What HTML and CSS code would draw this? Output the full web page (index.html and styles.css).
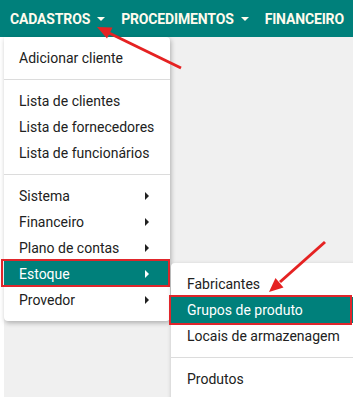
FILE: index.html
```html
<!doctype html>
<html>
    <head>
        <meta charset="utf-8"/>
        <title>Cadastros</title>
        <link rel="stylesheet" href="styles.css">
    </head>
    <body>
        <header class="navbar">
            <a class="nav-link dropdown-toggle">Cadastros</a>
            <a class="nav-link dropdown-toggle">Procedimentos</a>
            <a class="nav-link">Financeiro</a>
        </header>
        <main class="page">
            <div class="content"></div>

            <ul class="dropdown-menu main-menu">
                <li class="dropdown-item">Adicionar cliente</li>
                <li class="dropdown-divider"></li>
                <li class="dropdown-item">Lista de clientes</li>
                <li class="dropdown-item">Lista de fornecedores</li>
                <li class="dropdown-item">Lista de funcionários</li>
                <li class="dropdown-divider"></li>
                <li class="dropdown-item submenu">Sistema</li>
                <li class="dropdown-item submenu">Financeiro</li>
                <li class="dropdown-item submenu">Plano de contas</li>
                <li class="dropdown-item submenu active marked">Estoque</li>
                <li class="dropdown-item submenu">Provedor</li>
            </ul>

            <ul class="dropdown-menu sub-menu">
                <li class="dropdown-item">Fabricantes</li>
                <li class="dropdown-item active marked marked-wide">Grupos de produto</li>
                <li class="dropdown-item">Locais de armazenagem</li>
                <li class="dropdown-divider"></li>
                <li class="dropdown-item">Produtos</li>
            </ul>
        </main>

        <!-- setas de anotação -->
        <svg class="annotations" width="353" height="397" viewBox="0 0 353 397">
            <line x1="181" y1="68" x2="109" y2="33" />
            <polygon points="97,27 112.5,27.5 107,38.5" />
            <line x1="325" y1="242" x2="280" y2="282" />
            <polygon points="269,292 283.5,287.5 275.5,278" />
        </svg>
    </body>
</html>
```

FILE: styles.css
```css
* {
    margin: 0;
    padding: 0;
    box-sizing: border-box;
}
body {
    width: 353px;
    height: 397px;
    overflow: hidden;
    position: relative;
    background-color: #fff;
    font-family: Roboto, "Liberation Sans", sans-serif;
    font-size: 14px;
    color: #212121;
}
.navbar {
    display: flex;
    align-items: center;
    height: 37px;
    padding-left: 10px;
    background-color: #00807b;
    white-space: nowrap;
}
.nav-link {
    display: flex;
    align-items: center;
    margin-right: 16px;
    font-weight: bold;
    text-transform: uppercase;
    letter-spacing: -0.15px;
    color: #fffbee;
}
.dropdown-toggle::after {
    content: "";
    margin-left: 7px;
    border-top: 4px solid #fffbee;
    border-left: 4px solid transparent;
    border-right: 4px solid transparent;
}
.page {
    position: relative;
    height: 360px;
    padding-left: 4px;
}
.content {
    height: 100%;
    background-color: #f0f0f0;
}
.dropdown-menu {
    position: absolute;
    list-style: none;
    padding: 8px 0;
    background-color: #fff;
    box-shadow: 1px 2px 5px rgba(0, 0, 0, .28);
}
.main-menu {
    top: 0;
    left: 4px;
    width: 166px;
    border-radius: 0 4px 4px 4px;
}
.sub-menu {
    top: 226px;
    left: 171px;
    width: 190px;
    border-radius: 4px 0 0 0;
}
.dropdown-item {
    display: flex;
    align-items: center;
    height: 26px;
    padding: 0 15px;
    white-space: nowrap;
    position: relative;
}
.sub-menu .dropdown-item {
    padding-left: 16px;
}
.dropdown-item.submenu::after {
    content: "";
    position: absolute;
    right: 21px;
    top: 9px;
    border-left: 4px solid #212121;
    border-top: 4px solid transparent;
    border-bottom: 4px solid transparent;
}
.dropdown-item.active {
    background-color: #00807b;
    color: #fff;
}
.dropdown-item.active.submenu::after {
    border-left-color: #fff;
}
.dropdown-divider {
    height: 1px;
    margin: 8px 0;
    background-color: #dcdcdc;
}
/* moldura vermelha da anotação */
.marked::before {
    content: "";
    position: absolute;
    top: -2px;
    bottom: 0;
    left: -3px;
    right: 0;
    border: 2px solid #e0262b;
}
.marked-wide::before {
    top: -2px;
    bottom: -2px;
    left: -2px;
    right: 9px;
}
.annotations {
    position: absolute;
    top: 0;
    left: 0;
    pointer-events: none;
}
.annotations line {
    stroke: #e52222;
    stroke-width: 3;
}
.annotations polygon {
    fill: #e52222;
}
```
